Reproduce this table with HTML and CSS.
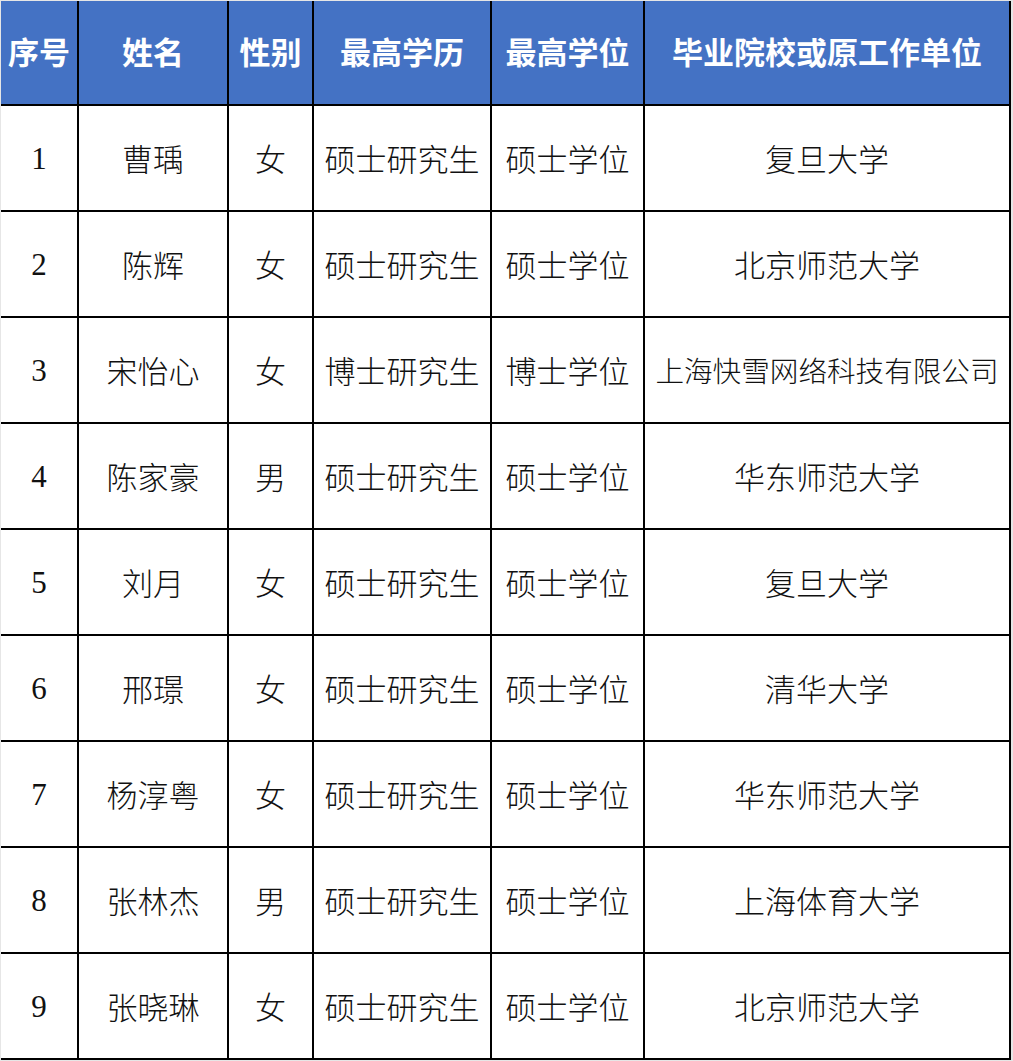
FILE: index.html
```html
<!DOCTYPE html>
<html lang="zh-CN">
<head>
<meta charset="utf-8">
<title>名单</title>
<link rel="stylesheet" href="styles.css">
</head>
<body>
<div class="sheet">
  <div class="hd">序号</div><div class="hd">姓名</div><div class="hd">性别</div><div class="hd">最高学历</div><div class="hd">最高学位</div><div class="hd">毕业院校或原工作单位</div>

  <div class="c num">1</div><div class="c">曹瑀</div><div class="c">女</div><div class="c">硕士研究生</div><div class="c">硕士学位</div><div class="c">复旦大学</div>
  <div class="c num">2</div><div class="c">陈辉</div><div class="c">女</div><div class="c">硕士研究生</div><div class="c">硕士学位</div><div class="c">北京师范大学</div>
  <div class="c num">3</div><div class="c">宋怡心</div><div class="c">女</div><div class="c">博士研究生</div><div class="c">博士学位</div><div class="c shrink">上海快雪网络科技有限公司</div>
  <div class="c num">4</div><div class="c">陈家豪</div><div class="c">男</div><div class="c">硕士研究生</div><div class="c">硕士学位</div><div class="c">华东师范大学</div>
  <div class="c num">5</div><div class="c">刘月</div><div class="c">女</div><div class="c">硕士研究生</div><div class="c">硕士学位</div><div class="c">复旦大学</div>
  <div class="c num">6</div><div class="c">邢璟</div><div class="c">女</div><div class="c">硕士研究生</div><div class="c">硕士学位</div><div class="c">清华大学</div>
  <div class="c num">7</div><div class="c">杨淳粤</div><div class="c">女</div><div class="c">硕士研究生</div><div class="c">硕士学位</div><div class="c">华东师范大学</div>
  <div class="c num">8</div><div class="c">张林杰</div><div class="c">男</div><div class="c">硕士研究生</div><div class="c">硕士学位</div><div class="c">上海体育大学</div>
  <div class="c num">9</div><div class="c">张晓琳</div><div class="c">女</div><div class="c">硕士研究生</div><div class="c">硕士学位</div><div class="c">北京师范大学</div>
</div>
</body>
</html>
```

FILE: styles.css
```css
html, body {
  margin: 0;
  padding: 0;
  background: #e6e6e6;
}

body {
  font-family: "Noto Sans CJK SC", "Noto Sans", sans-serif;
  overflow: hidden;
}

.sheet {
  margin: 1px 0 0 1px;
  width: 1008px;
  display: grid;
  grid-template-columns: 76px 148px 83px 176px 151px 364px;
  grid-template-rows: 103px repeat(9, 104px);
  gap: 2px;
  background: #000;
  padding: 0 2px 2px 0;
}

.hd {
  background: #4472c4;
  color: #fff;
  font-weight: 700;
  font-size: 31px;
  display: flex;
  align-items: center;
  justify-content: center;
  white-space: nowrap;
  padding-bottom: 4px;
}

.c {
  background: #fff;
  color: #111;
  font-weight: 300;
  font-size: 31px;
  display: flex;
  align-items: center;
  justify-content: center;
  white-space: nowrap;
  padding-bottom: 1px;
}

.num {
  font-family: "Liberation Serif", "Noto Sans CJK SC", serif;
  font-size: 31px;
  padding-bottom: 0;
  padding-top: 2px;
}

.shrink {
  font-size: 28.6px;
}
```
